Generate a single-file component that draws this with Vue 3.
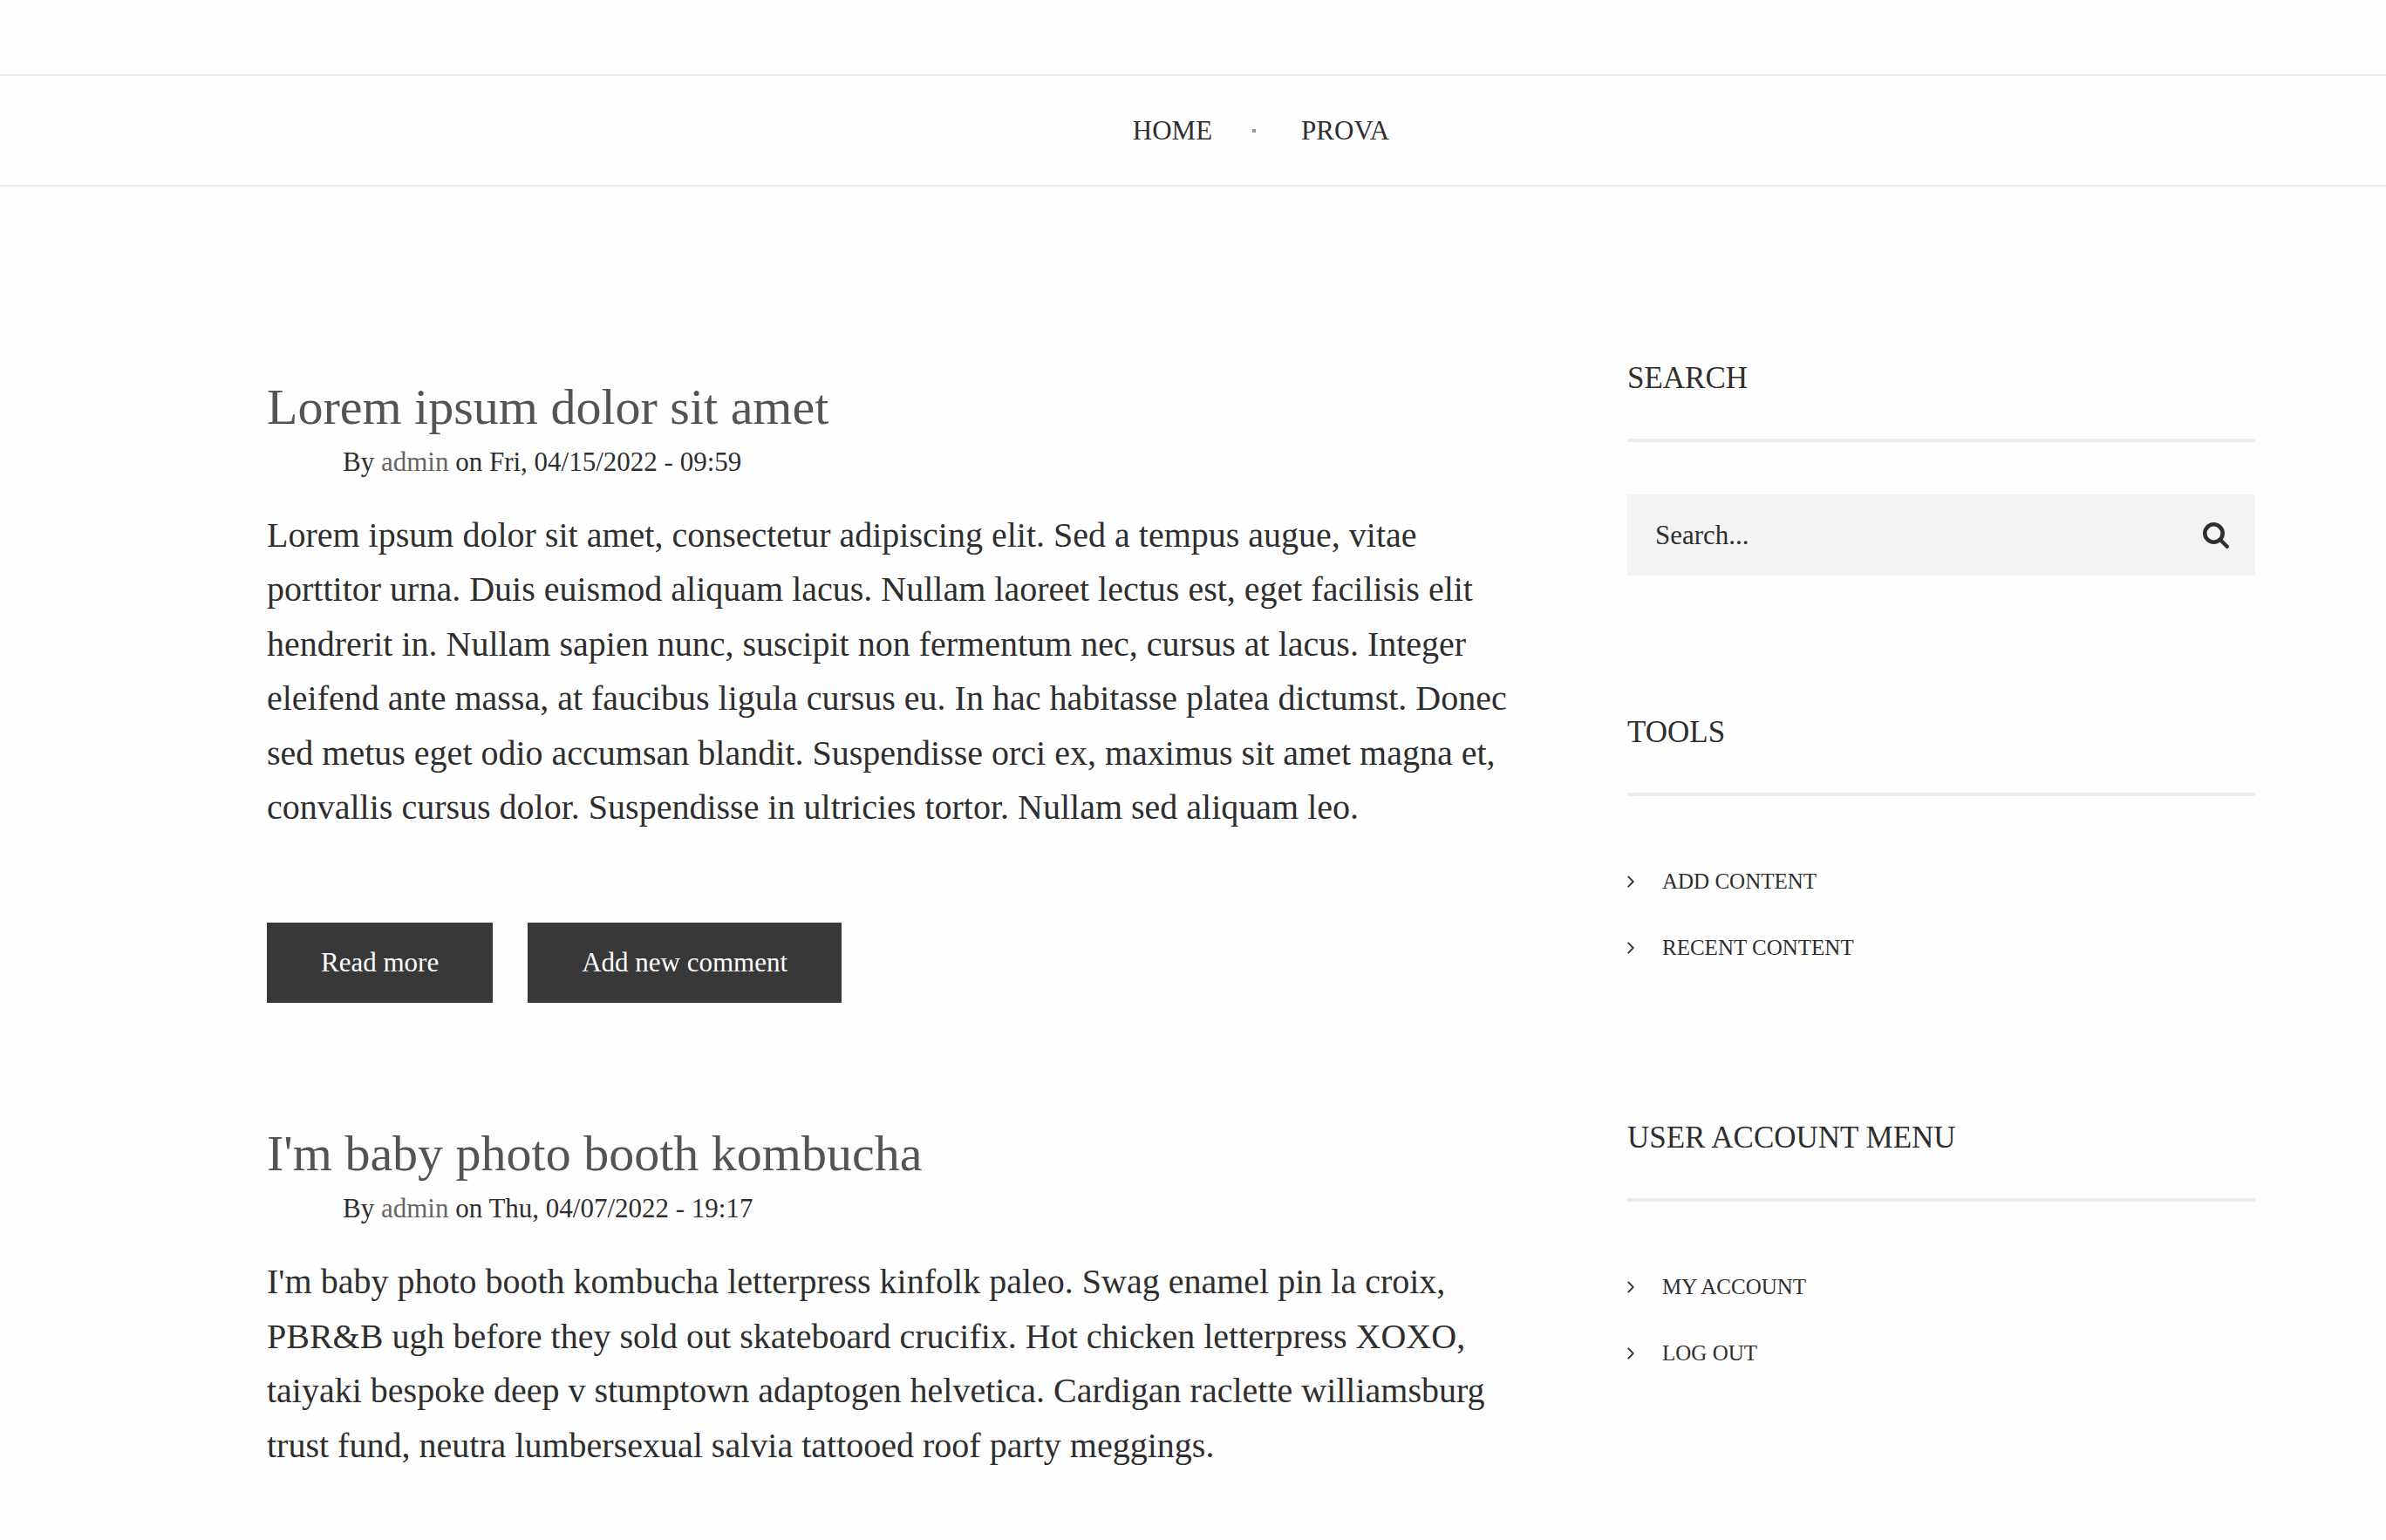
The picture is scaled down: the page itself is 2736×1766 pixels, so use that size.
<script setup>
const navLinks = ['Home', 'Prova']

const articles = [
  {
    title: 'Lorem ipsum dolor sit amet',
    author: 'admin',
    date: 'Fri, 04/15/2022 - 09:59',
    body: 'Lorem ipsum dolor sit amet, consectetur adipiscing elit. Sed a tempus augue, vitae porttitor urna. Duis euismod aliquam lacus. Nullam laoreet lectus est, eget facilisis elit hendrerit in. Nullam sapien nunc, suscipit non fermentum nec, cursus at lacus. Integer eleifend ante massa, at faucibus ligula cursus eu. In hac habitasse platea dictumst. Donec sed metus eget odio accumsan blandit. Suspendisse orci ex, maximus sit amet magna et, convallis cursus dolor. Suspendisse in ultricies tortor. Nullam sed aliquam leo.',
    actions: ['Read more', 'Add new comment'],
  },
  {
    title: "I'm baby photo booth kombucha",
    author: 'admin',
    date: 'Thu, 04/07/2022 - 19:17',
    body: "I'm baby photo booth kombucha letterpress kinfolk paleo. Swag enamel pin la croix, PBR&B ugh before they sold out skateboard crucifix. Hot chicken letterpress XOXO, taiyaki bespoke deep v stumptown adaptogen helvetica. Cardigan raclette williamsburg trust fund, neutra lumbersexual salvia tattooed roof party meggings.",
    actions: [],
  },
]

const menus = [
  { title: 'Tools', links: ['Add content', 'Recent content'] },
  { title: 'User account menu', links: ['My account', 'Log out'] },
]
</script>

<template>
  <div class="page">
    <header class="header">
      <nav class="nav" aria-label="Main navigation">
        <ul class="nav-list">
          <li v-for="link in navLinks" :key="link" class="nav-item">
            <a href="#" class="nav-link">{{ link }}</a>
          </li>
        </ul>
      </nav>
    </header>

    <div class="layout">
      <main class="articles">
        <article v-for="article in articles" :key="article.title">
          <h2 class="title"><a href="#">{{ article.title }}</a></h2>
          <p class="meta">By <a href="#">{{ article.author }}</a> on {{ article.date }}</p>
          <p class="body">{{ article.body }}</p>
          <div v-if="article.actions.length" class="actions">
            <a v-for="action in article.actions" :key="action" href="#" class="action">{{ action }}</a>
          </div>
        </article>
      </main>

      <aside class="sidebar">
        <section>
          <h2 class="block-title">Search</h2>
          <form class="search" role="search" @submit.prevent>
            <input type="search" class="search-input" placeholder="Search..." aria-label="Search" />
            <button type="submit" class="search-button" aria-label="Submit search">
              <svg width="30" height="30" viewBox="0 0 30 30" fill="none" stroke="currentColor" aria-hidden="true">
                <circle cx="12.5" cy="12.5" r="10.2" stroke-width="4.6" />
                <path d="M20.5 20.5 L27.7 27.7" stroke-width="4.4" stroke-linecap="round" />
              </svg>
            </button>
          </form>
        </section>

        <section v-for="menu in menus" :key="menu.title">
          <h2 class="block-title">{{ menu.title }}</h2>
          <ul class="menu">
            <li v-for="link in menu.links" :key="link" class="menu-item">
              <svg width="8" height="14" viewBox="0 0 8 14" fill="none" stroke="currentColor" stroke-width="1.8" aria-hidden="true">
                <path d="M0.8 0.9 L6.8 7 L0.8 13.1" />
              </svg>
              <a href="#">{{ link }}</a>
            </li>
          </ul>
        </section>
      </aside>
    </div>
  </div>
</template>

<style>
body {
  background: #fefefe;
}
</style>

<style scoped>
.page {
  color: #2e2e2e;
  font-family: Georgia, "Liberation Serif", serif;
  font-size: 40px;
  padding-top: 85px;
}

h2,
p,
ul {
  margin: 0;
  padding: 0;
}

ul {
  list-style: none;
}

a {
  color: inherit;
  text-decoration: none;
}

.header {
  border-top: 2px solid #ededed;
  border-bottom: 2px solid #ededed;
  padding: 0 150px 0 306px;
}

.nav-list {
  display: flex;
  justify-content: center;
}

.nav-item {
  display: flex;
  align-items: center;
  font-size: 31px;
  line-height: 125px;
  text-transform: uppercase;
}

.nav-item + .nav-item::before {
  content: "";
  width: 4px;
  height: 4px;
  margin: 0 52px 0 46px;
  background: #999;
}

.layout {
  display: grid;
  grid-template-columns: minmax(0, 2fr) minmax(0, 1fr);
  gap: 120px;
  padding: 200px 150px 60px 306px;
}

.articles {
  display: flex;
  flex-direction: column;
  gap: 141px;
  padding-top: 21px;
}

.title {
  color: #545454;
  font-size: 58px;
  font-weight: 400;
  line-height: 64px;
}

.meta {
  margin-top: 9px;
  padding-left: 87px;
  font-size: 31px;
  line-height: 44px;
}

.meta a {
  color: #666;
}

.body {
  margin-top: 31px;
  line-height: 1.56;
}

.actions {
  display: flex;
  flex-wrap: wrap;
  gap: 40px;
  margin-top: 101px;
}

.action {
  padding: 0 62px;
  background: #383838;
  color: #fff;
  font-size: 31px;
  line-height: 92px;
}

.sidebar {
  display: flex;
  flex-direction: column;
  gap: 160px;
}

.block-title {
  margin-bottom: 60px;
  padding-bottom: 49px;
  border-bottom: 4px solid #ededed;
  font-size: 35px;
  font-weight: 400;
  line-height: 40px;
  text-transform: uppercase;
}

.search {
  display: flex;
  background: #f3f3f3;
}

.search-input {
  flex: 1;
  min-width: 0;
  height: 93px;
  box-sizing: border-box;
  padding: 0 32px;
  border: 0;
  background: transparent;
  color: inherit;
  font: inherit;
  font-size: 31px;
  appearance: none;
}

.search-input::placeholder {
  color: #2e2e2e;
  opacity: 1;
}

.search-button {
  display: flex;
  align-items: center;
  padding: 0 30px;
  border: 0;
  background: transparent;
  color: inherit;
  cursor: pointer;
}

.menu-item {
  display: flex;
  align-items: center;
  gap: 32px;
  font-size: 25px;
  line-height: 76px;
  text-transform: uppercase;
}

@media (max-width: 1200px) {
  .header,
  .layout {
    padding-left: 40px;
    padding-right: 40px;
  }

  .layout {
    grid-template-columns: minmax(0, 1fr);
  }
}
</style>
